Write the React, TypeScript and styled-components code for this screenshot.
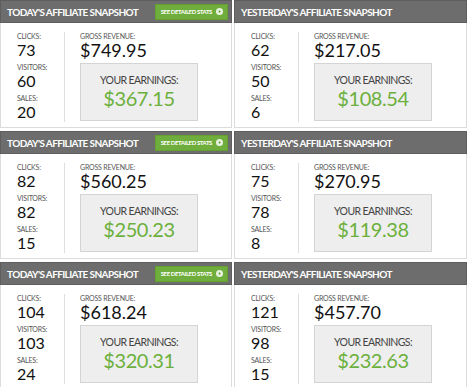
import React from 'react';
import styled, { createGlobalStyle } from 'styled-components';

const GlobalStyle = createGlobalStyle`
  html, body {
    margin: 0;
    padding: 0;
    background: #fff;
  }
  body {
    font-family: Lato, "Open Sans", "Liberation Sans", sans-serif;
    color: #222;
  }
`;

const Grid = styled.div`
  display: grid;
  grid-template-columns: 232px 233px;
  grid-auto-rows: 128px;
  column-gap: 2px;
  row-gap: 3px;
  width: 467px;
  height: 387px;
  overflow: hidden;
`;

const Panel = styled.section`
  display: flex;
  flex-direction: column;
  border: 1px solid #dcdcdc;
  border-top: none;
  background: #fff;
  box-sizing: border-box;
`;

const Header = styled.header`
  display: flex;
  align-items: center;
  justify-content: space-between;
  height: 21px;
  flex: none;
  padding: 0 3px 0 6px;
  margin: 0 -1px;
  background: #6d6d6d;
  border: 1px solid #5e5e5e;
`;

const Title = styled.h2`
  margin: 0;
  font-size: 10px;
  font-weight: 700;
  letter-spacing: -0.6px;
  color: #fff;
  text-transform: uppercase;
  white-space: nowrap;
`;

const StatsButton = styled.a`
  display: flex;
  align-items: center;
  gap: 4px;
  height: 14px;
  padding: 0 4px 0 5px;
  background: #6fae3c;
  border: 1px solid #63a02f;
  color: #fff;
  font-size: 6px;
  font-weight: 700;
  letter-spacing: -0.4px;
  text-transform: uppercase;
  white-space: nowrap;
  text-decoration: none;
`;

const Body = styled.div`
  display: flex;
  flex: 1;
  padding: 9px 0 8px 16px;
`;

const Counts = styled.div`
  display: flex;
  flex-direction: column;
  gap: 3.4px;
  width: 47px;
  border-right: 1px solid #dedede;
`;

const Count = styled.div`
  display: flex;
  flex-direction: column;
`;

const Label = styled.span`
  font-size: 7px;
  color: #555;
  text-transform: uppercase;
  letter-spacing: -0.2px;
  line-height: 1.2;
`;

const Value = styled.span`
  font-size: 16px;
  line-height: 1.2;
  color: #111;
`;

const Revenue = styled.div`
  display: flex;
  flex-direction: column;
  padding-left: 15px;
`;

const Amount = styled.span`
  font-size: 18px;
  line-height: 1.2;
  color: #111;
`;

const EarningsBox = styled.div`
  display: flex;
  flex-direction: column;
  align-items: center;
  justify-content: center;
  width: 118px;
  height: 58px;
  margin-top: 1px;
  box-sizing: border-box;
  background: #eeeeee;
  border: 1px solid #d4d4d4;
`;

const EarningsLabel = styled.span`
  font-size: 10.5px;
  line-height: 1.2;
  color: #444;
  text-transform: uppercase;
  letter-spacing: -0.6px;
`;

const Earnings = styled.span`
  font-size: 20px;
  line-height: 1.2;
  color: #6cb03c;
  letter-spacing: -0.4px;
`;

const PlayIcon = () => (
  <svg width="7" height="7" viewBox="0 0 10 10">
    <circle cx="5" cy="5" r="5" fill="#e8f2df" />
    <path d="M4 3 L7 5 L4 7 Z" fill="#5d9a2f" />
  </svg>
);

interface Snapshot {
  today: boolean;
  clicks: number;
  visitors: number;
  sales: number;
  gross: string;
  earnings: string;
}

const snapshots: Snapshot[] = [
  { today: true, clicks: 73, visitors: 60, sales: 20, gross: '$749.95', earnings: '$367.15' },
  { today: false, clicks: 62, visitors: 50, sales: 6, gross: '$217.05', earnings: '$108.54' },
  { today: true, clicks: 82, visitors: 82, sales: 15, gross: '$560.25', earnings: '$250.23' },
  { today: false, clicks: 75, visitors: 78, sales: 8, gross: '$270.95', earnings: '$119.38' },
  { today: true, clicks: 104, visitors: 103, sales: 24, gross: '$618.24', earnings: '$320.31' },
  { today: false, clicks: 121, visitors: 98, sales: 15, gross: '$457.70', earnings: '$232.63' },
];

const SnapshotPanel: React.FC<{ snap: Snapshot }> = function(props) {
  const { snap } = props;

  return (
    <Panel>
      <Header>
        <Title>{snap.today ? "Today's Affiliate Snapshot" : "Yesterday's Affiliate Snapshot"}</Title>
        {snap.today && (
          <StatsButton href="#">
            See Detailed Stats
            <PlayIcon />
          </StatsButton>
        )}
      </Header>
      <Body>
        <Counts>
          <Count>
            <Label>Clicks:</Label>
            <Value>{snap.clicks}</Value>
          </Count>
          <Count>
            <Label>Visitors:</Label>
            <Value>{snap.visitors}</Value>
          </Count>
          <Count>
            <Label>Sales:</Label>
            <Value>{snap.sales}</Value>
          </Count>
        </Counts>
        <Revenue>
          <Label>Gross Revenue:</Label>
          <Amount>{snap.gross}</Amount>
          <EarningsBox>
            <EarningsLabel>Your Earnings:</EarningsLabel>
            <Earnings>{snap.earnings}</Earnings>
          </EarningsBox>
        </Revenue>
      </Body>
    </Panel>
  );
};

const App: React.FC = function() {
  return (
    <>
      <GlobalStyle />
      <Grid>
        {snapshots.map((snap, i) => (
          <SnapshotPanel key={i} snap={snap} />
        ))}
      </Grid>
    </>
  );
};

export default App;
